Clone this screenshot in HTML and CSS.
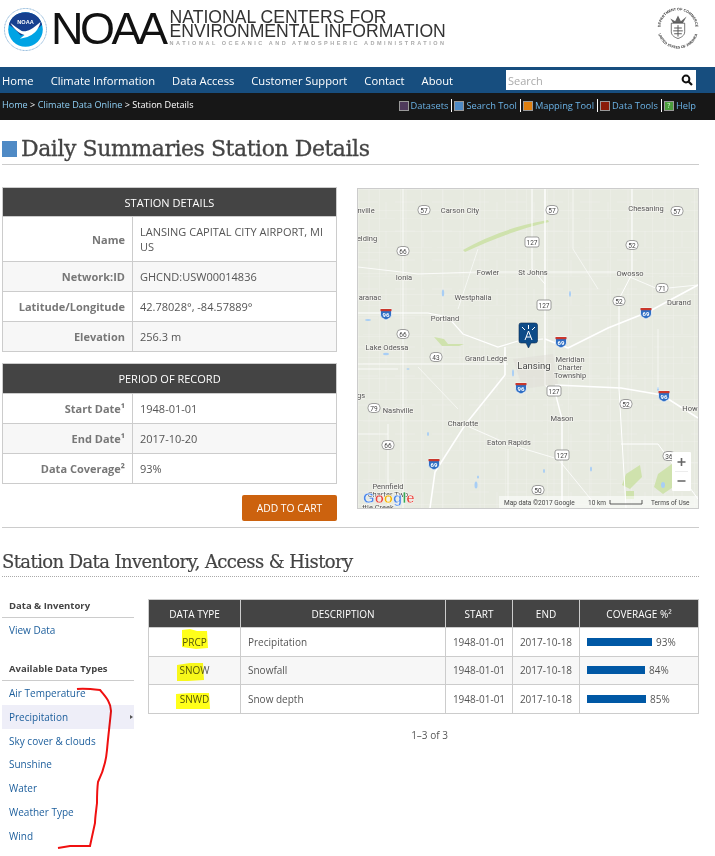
FILE: index.html
```html
<!DOCTYPE html>
<html>
<head>
  <title>Daily Summaries Station Details</title>
  <link rel="stylesheet" href="styles.css">
</head>
<body>

  <div class="masthead">
    <svg class="noaa-seal" viewBox="0 0 46 46" width="43" height="43">
      <circle cx="23" cy="23" r="22.5" fill="#fff" stroke="#1c6fb5" stroke-width="0.6" stroke-dasharray="1 0.6"/>
      <circle cx="23" cy="23" r="18.5" fill="#00a3e4"/>
      <path d="M5.2 18C7 10 14 4.5 23 4.5S39 10 40.8 18C37 22 33 24 28 26.5L18 29.5C14 25 10 21 5.2 18Z" fill="#17408f"/>
      <path d="M7 16C11 19 15 22 19 24.5C23 26 29 24 39 15C37 24 31 29 25 31L17 33L22 29C16 27 10 22 7 16Z" fill="#fff"/>
      <text x="23" y="17" class="seal-name">NOAA</text>
    </svg>
    <div class="noaa-mark">NOAA</div>
    <div class="center-name">
      <div class="center-line">NATIONAL CENTERS FOR</div>
      <div class="center-line">ENVIRONMENTAL INFORMATION</div>
      <div class="center-sub">NATIONAL OCEANIC AND ATMOSPHERIC ADMINISTRATION</div>
    </div>
    <svg class="doc-seal" viewBox="0 0 46 46" width="44" height="44">
      <defs>
        <path id="seal-top" d="M4.5 23A18.500 18.500 0 0 1 41.500 23"/>
        <path id="seal-bottom" d="M1.500 23A21.500 21.500 0 0 0 44.500 23"/>
      </defs>
      <text class="doc-seal-text"><textPath href="#seal-top" startOffset="50%">DEPARTMENT OF COMMERCE</textPath></text>
      <text class="doc-seal-text"><textPath href="#seal-bottom" startOffset="50%">UNITED STATES OF AMERICA</textPath></text>
      <path d="M15 13L20 16L23 10L26 16L32 11L28 18H18Z" fill="#666"/>
      <path d="M16 18H30V27C30 31 26 33 23 34C20 33 16 31 16 27Z" fill="#fff" stroke="#333" stroke-width="0.7"/>
      <path d="M23 20V32M19 23L27 23M18 26L28 26M19 29L27 29" stroke="#555" stroke-width="1"/>
    </svg>
  </div>

  <div class="nav-bar">
    <a class="nav-link">Home</a>
    <a class="nav-link">Climate Information</a>
    <a class="nav-link">Data Access</a>
    <a class="nav-link">Customer Support</a>
    <a class="nav-link">Contact</a>
    <a class="nav-link">About</a>
    <div class="search-box">
      <span class="search-text">Search</span>
      <svg width="12" height="12" viewBox="0 0 12 12">
        <circle cx="5" cy="5" r="3.4" fill="none" stroke="#111" stroke-width="2"/>
        <path d="M7.5 7.5L11 11" stroke="#111" stroke-width="2.2"/>
      </svg>
    </div>
  </div>

  <div class="crumb-bar">
    <div class="crumbs"><a>Home</a> &gt; <a>Climate Data Online</a> &gt; <span class="crumb-here">Station Details</span></div>
    <div class="tools">
      <a class="tool"><span class="swatch swatch-datasets"></span>Datasets</a>
      <a class="tool"><span class="swatch swatch-search"></span>Search Tool</a>
      <a class="tool"><span class="swatch swatch-mapping"></span>Mapping Tool</a>
      <a class="tool"><span class="swatch swatch-data"></span>Data Tools</a>
      <a class="tool"><span class="swatch swatch-help">?</span>Help</a>
    </div>
  </div>

  <div class="page">
    <h1 class="page-title"><span class="title-box"></span>Daily Summaries Station Details</h1>

    <div class="detail-row">
      <div class="detail-col">
        <table class="info-table">
          <colgroup><col class="info-label-col"><col></colgroup>
          <tr><th colspan="2" class="head-short">STATION DETAILS</th></tr>
          <tr><td class="info-label cell-tall">Name</td><td>LANSING CAPITAL CITY AIRPORT, MI US</td></tr>
          <tr class="alt"><td class="info-label">Network:ID</td><td>GHCND:USW00014836</td></tr>
          <tr><td class="info-label">Latitude/Longitude</td><td>42.78028°, -84.57889°</td></tr>
          <tr class="alt"><td class="info-label">Elevation</td><td>256.3 m</td></tr>
        </table>
        <table class="info-table">
          <colgroup><col class="info-label-col"><col></colgroup>
          <tr><th colspan="2">PERIOD OF RECORD</th></tr>
          <tr><td class="info-label">Start Date¹</td><td>1948-01-01</td></tr>
          <tr class="alt"><td class="info-label">End Date¹</td><td>2017-10-20</td></tr>
          <tr><td class="info-label">Data Coverage²</td><td>93%</td></tr>
        </table>
        <div class="cart-row"><button class="cart-btn">ADD TO CART</button></div>
      </div>

      <svg class="map" viewBox="0 0 340 319" width="342" height="321">
        <defs>
          <pattern id="grid" width="21" height="21" patternUnits="userSpaceOnUse">
            <path d="M0 0H21M0 0V21" stroke="#f2f3ec" stroke-width="0.7" fill="none"/>
          </pattern>
          <pattern id="grid-fine" width="37" height="29" patternUnits="userSpaceOnUse">
            <path d="M5 0H37M11 0V29M0 13H20M28 13V29" stroke="#f0f1ea" stroke-width="0.5" fill="none"/>
          </pattern>
        </defs>
        <rect width="340" height="319" fill="#e7eae0"/>
        <rect width="340" height="319" fill="url(#grid)"/>
        <rect width="340" height="319" fill="url(#grid-fine)"/>
        <g fill="#cfe2ad">
          <path d="M105 61C125 50 150 38 190 31L191 33C160 40 130 52 107 63Z"/>
          <path d="M76 148L86 150L90 155L106 155L101 157L84 157Z"/>
          <path d="M268 285L282 276L284 288L272 300L264 296Z"/>
          <path d="M300 285L318 272L324 292L305 305L296 298Z"/>
          <path d="M268 302H276V310H268Z"/>
        </g>
        <g fill="#a8cef5">
          <ellipse cx="10" cy="131" rx="3" ry="1"/><ellipse cx="212" cy="105" rx="1" ry="3"/>
          <ellipse cx="85" cy="104" rx="1.200" ry="3.500"/><ellipse cx="118" cy="296" rx="1.500" ry="3.500"/>
          <ellipse cx="28" cy="165" rx="3" ry="1.200"/><ellipse cx="186" cy="282" rx="1" ry="2"/>
          <ellipse cx="50" cy="180" rx="1.500" ry="0.800"/><ellipse cx="300" cy="200" rx="1" ry="2"/>
          <ellipse cx="233" cy="280" rx="1" ry="2.500"/><ellipse cx="155" cy="184" rx="1" ry="3.500"/>
          <ellipse cx="305" cy="296" rx="2" ry="3"/><ellipse cx="316" cy="285" rx="1.500" ry="2.500"/>
          <ellipse cx="120" cy="288" rx="1" ry="1.500"/><ellipse cx="70" cy="245" rx="1" ry="2"/>
        </g>
        <g fill="none" stroke="#fff" stroke-width="1.2">
          <path d="M0 124H70L90 128L105 145L140 158L160 152L185 150"/>
          <path d="M187 0V196L197 203L204 230V319" stroke-width="1.400"/>
          <path d="M147 186L107 236L77 283L72 319" stroke-width="1.600"/>
          <path d="M147 186V158" stroke-width="1.600"/>
          <path d="M210 159L250 139L290 123L340 96" stroke-width="1.600"/>
          <path d="M197 196L263 199L304 206L340 229" stroke-width="1.600"/>
          <path d="M45 0V319" stroke-width="0.800"/>
          <path d="M30 235V319" stroke-width="0.800"/>
          <path d="M0 175H150M0 180H40" stroke-width="0.800"/>
          <path d="M274 0V85L261 110V200L268 319" stroke-width="1"/>
          <path d="M174 0V80L187 95" stroke-width="1"/>
          <path d="M0 78L60 85L120 83H260L300 100L340 96" stroke-width="0.800"/>
          <path d="M107 236L150 255L200 270L240 319" stroke-width="0.800"/>
          <path d="M263 255H300L340 310" stroke-width="1"/>
          <path d="M187 150L210 159" stroke-width="1.600"/>
          <path d="M60 178L100 220M0 245H30M100 120L120 60M215 0V60L240 100M300 140V200M150 260V319" stroke-width="0.600"/>
        </g>
        <path d="M155 170L195 165L200 195L165 200Z" fill="#dedcd4" opacity="0.45"/>

        <g class="map-label">
          <text x="8" y="24">nville</text><text x="102" y="24">Carson City</text><text x="288" y="22">Chesaning</text>
          <text x="9" y="52">elding</text><text x="46" y="91">Ionia</text><text x="130" y="86">Fowler</text>
          <text x="175" y="86">St Johns</text><text x="272" y="87">Owosso</text><text x="12" y="111">aranac</text>
          <text x="115" y="111">Westphalia</text><text x="321" y="116">Durand</text><text x="87" y="132">Portland</text>
          <text x="29" y="161">Lake Odessa</text><text x="128" y="172">Grand Ledge</text>
          <text x="212" y="173">Meridian</text><text x="212" y="181">Charter</text><text x="212" y="189">Township</text>
          <text x="3" y="209">gs</text><text x="40" y="224">Nashville</text><text x="332" y="222">How</text>
          <text x="105" y="237">Charlotte</text><text x="204" y="232">Mason</text><text x="151" y="256">Eaton Rapids</text>
          <text x="30" y="300">Pennfield</text><text x="30" y="308">Charter Twp</text><text x="20" y="321">ttle Creek</text>
          <text x="176" y="180" class="map-city">Lansing</text>
        </g>

        <g class="shield">
          <g transform="translate(66 21)"><rect x="-6" y="-4.500" width="12" height="9" rx="4"/><text y="2.500">57</text></g>
          <g transform="translate(194 21)"><rect x="-6" y="-4.500" width="12" height="9" rx="4"/><text y="2.500">57</text></g>
          <g transform="translate(319 22)"><rect x="-6" y="-4.500" width="12" height="9" rx="4"/><text y="2.500">57</text></g>
          <g transform="translate(274 56)"><rect x="-6" y="-4.500" width="12" height="9" rx="4"/><text y="2.500">52</text></g>
          <g transform="translate(45 62)"><rect x="-6" y="-4.500" width="12" height="9" rx="4"/><text y="2.500">66</text></g>
          <g transform="translate(304 99)"><rect x="-6" y="-4.500" width="12" height="9" rx="4"/><text y="2.500">71</text></g>
          <g transform="translate(261 112)"><rect x="-6" y="-4.500" width="12" height="9" rx="4"/><text y="2.500">52</text></g>
          <g transform="translate(45 145)"><rect x="-6" y="-4.500" width="12" height="9" rx="4"/><text y="2.500">66</text></g>
          <g transform="translate(78 168)"><rect x="-6" y="-4.500" width="12" height="9" rx="4"/><text y="2.500">43</text></g>
          <g transform="translate(268 215)"><rect x="-6" y="-4.500" width="12" height="9" rx="4"/><text y="2.500">52</text></g>
          <g transform="translate(16 219)"><rect x="-6" y="-4.500" width="12" height="9" rx="4"/><text y="2.500">79</text></g>
          <g transform="translate(30 256)"><rect x="-6" y="-4.500" width="12" height="9" rx="4"/><text y="2.500">66</text></g>
          <g transform="translate(180 301)"><rect x="-6" y="-4.500" width="12" height="9" rx="4"/><text y="2.500">50</text></g>
          <g transform="translate(311 267)"><rect x="-6" y="-4.500" width="12" height="9" rx="4"/><text y="2.500">36</text></g>
          <g transform="translate(174 53)"><rect x="-7" y="-5" width="14" height="10" rx="2"/><text y="2.500">127</text></g>
          <g transform="translate(186 116)"><rect x="-7" y="-5" width="14" height="10" rx="2"/><text y="2.500">127</text></g>
          <g transform="translate(196 202)"><rect x="-7" y="-5" width="14" height="10" rx="2"/><text y="2.500">127</text></g>
          <g transform="translate(204 266)"><rect x="-7" y="-5" width="14" height="10" rx="2"/><text y="2.500">127</text></g>
        </g>

        <g class="interstate">
          <g transform="translate(28 125)"><path d="M-5.500 -5H5.500V1C5.500 3.500 2 5 0 6C-2 5 -5.500 3.500 -5.500 1Z"/><rect x="-5.500" y="-5" width="11" height="2.200"/><text y="3">96</text></g>
          <g transform="translate(203 153)"><path d="M-5.500 -5H5.500V1C5.500 3.500 2 5 0 6C-2 5 -5.500 3.500 -5.500 1Z"/><rect x="-5.500" y="-5" width="11" height="2.200"/><text y="3">69</text></g>
          <g transform="translate(288 124)"><path d="M-5.500 -5H5.500V1C5.500 3.500 2 5 0 6C-2 5 -5.500 3.500 -5.500 1Z"/><rect x="-5.500" y="-5" width="11" height="2.200"/><text y="3">69</text></g>
          <g transform="translate(163 199)"><path d="M-5.500 -5H5.500V1C5.500 3.500 2 5 0 6C-2 5 -5.500 3.500 -5.500 1Z"/><rect x="-5.500" y="-5" width="11" height="2.200"/><text y="3">96</text></g>
          <g transform="translate(306 207)"><path d="M-5.500 -5H5.500V1C5.500 3.500 2 5 0 6C-2 5 -5.500 3.500 -5.500 1Z"/><rect x="-5.500" y="-5" width="11" height="2.200"/><text y="3">96</text></g>
          <g transform="translate(76 275)"><path d="M-5.500 -5H5.500V1C5.500 3.500 2 5 0 6C-2 5 -5.500 3.500 -5.500 1Z"/><rect x="-5.500" y="-5" width="11" height="2.200"/><text y="3">69</text></g>
        </g>

        <path d="M163 134H177Q179.500 134 179.500 136V152Q179.500 154 177 154H173L170.500 159L168 154H163Q161 154 161 152V136Q161 134 163 134Z" fill="#0d4b88" stroke="#0b2c52" stroke-width="0.6"/>
        <path d="M170.500 142L167 151M170.500 142L174 151M168 148H173M164 138L167 141M177 138L174 141M170.500 136V140" stroke="#fff" stroke-width="1" fill="none"/>

        <g class="map-zoom">
          <rect x="314" y="263" width="19" height="39" rx="1" fill="#fff"/>
          <path d="M317 282.500H330" stroke="#e4e4e4" stroke-width="0.7"/>
          <path d="M319.500 273H327.500M323.500 269V277M319.500 292H327.500" stroke="#666" stroke-width="1.6"/>
        </g>

        <text x="5" y="314" class="google-mark"><tspan fill="#4a86e8">G</tspan><tspan fill="#e8453c">o</tspan><tspan fill="#f4b400">o</tspan><tspan fill="#4a86e8">g</tspan><tspan fill="#34a853">l</tspan><tspan fill="#e8453c">e</tspan></text>
        <rect x="141" y="307" width="199" height="12" fill="#fff" opacity="0.55"/>
        <text x="146" y="316" class="map-credit">Map data ©2017 Google</text>
        <text x="230" y="316" class="map-credit">10 km</text>
        <path d="M252 311V315H284V311" fill="none" stroke="#333" stroke-width="0.8"/>
        <text x="293" y="316" class="map-credit">Terms of Use</text>
      </svg>
    </div>

    <h2 class="section-title">Station Data Inventory, Access &amp; History</h2>

    <div class="inventory-row">
      <div class="side-nav">
        <div class="side-head">Data &amp; Inventory</div>
        <a class="side-link">View Data</a>
        <div class="side-head side-head-next">Available Data Types</div>
        <a class="side-link">Air Temperature</a>
        <a class="side-link side-current">Precipitation<span class="side-arrow"></span></a>
        <a class="side-link side-link-short">Sky cover &amp; clouds</a>
        <a class="side-link">Sunshine</a>
        <a class="side-link">Water</a>
        <a class="side-link">Weather Type</a>
        <a class="side-link">Wind</a>
      </div>

      <div class="inventory-main">
        <table class="data-table">
          <tr>
            <th class="col-type">DATA TYPE</th><th>DESCRIPTION</th><th class="col-date">START</th>
            <th class="col-date">END</th><th class="col-cover">COVERAGE %²</th>
          </tr>
          <tr>
            <td class="cell-type">PRCP</td><td>Precipitation</td><td class="cell-date">1948-01-01</td><td class="cell-date">2017-10-18</td>
            <td><span class="cover-bar" style="width:65px"></span>93%</td>
          </tr>
          <tr class="alt">
            <td class="cell-type">SNOW</td><td>Snowfall</td><td class="cell-date">1948-01-01</td><td class="cell-date">2017-10-18</td>
            <td><span class="cover-bar" style="width:58px"></span>84%</td>
          </tr>
          <tr>
            <td class="cell-type">SNWD</td><td>Snow depth</td><td class="cell-date">1948-01-01</td><td class="cell-date">2017-10-18</td>
            <td><span class="cover-bar" style="width:59px"></span>85%</td>
          </tr>
        </table>
        <div class="pager">1–3 of 3</div>
      </div>
    </div>
  </div>

  <!-- hand markup drawn over the screenshot -->
  <svg class="markup" viewBox="0 0 715 856" width="715" height="856">
    <path d="M182 630L190 629L197 631L207 631L208 648L196 649L182 647Z" fill="#ffff1a"/>
    <path d="M177 665L190 663L203 663L204 680L188 681L177 681Z" fill="#ffff1a"/>
    <path d="M176 694L190 693L209 693L210 709L176 709Z" fill="#ffff1a"/>
    <path d="M77 689C84 688 92 689 100 690C105 696 111 702 111 711C110 722 108 738 107 750C106 762 103 772 98 782C97 790 97 797 97 803C96 812 95 818 95 823L90 846L70 846L58 848" fill="none" stroke="#f01010" stroke-width="2"/>
  </svg>

</body>
</html>
```

FILE: styles.css
```css
body {
  margin: 0;
  width: 715px;
  height: 856px;
  overflow: hidden;
  position: relative;
  background: #fff;
  color: #555;
  font-family: "Open Sans", Arial, sans-serif;
  font-size: 11px;
}

a {
  text-decoration: none;
}

/* masthead */
.masthead {
  height: 67px;
  display: flex;
  align-items: flex-start;
  box-sizing: border-box;
  padding: 6px 15px 0 4px;
}

.noaa-seal {
  flex: none;
  margin: 2px 4px 0 0;
}

.seal-name {
  fill: #fff;
  font-family: "Liberation Sans", Arial, sans-serif;
  font-size: 6px;
  font-weight: bold;
  text-anchor: middle;
}

.noaa-mark {
  font-family: "Liberation Sans", Arial, sans-serif;
  font-size: 45px;
  line-height: 46px;
  letter-spacing: -3.500px;
  color: #111;
  margin-right: 5px;
}

.center-name {
  padding-top: 4px;
}

.center-line {
  font-family: "Liberation Sans", Arial, sans-serif;
  font-size: 17.600px;
  line-height: 14px;
  color: #333;
  white-space: nowrap;
}

.center-sub {
  font-family: "Liberation Sans", Arial, sans-serif;
  font-size: 5.500px;
  font-weight: bold;
  letter-spacing: 2.530px;
  line-height: 10px;
  color: #aaa;
  white-space: nowrap;
}

.doc-seal {
  margin-left: auto;
}

.doc-seal-text {
  font-family: "Liberation Sans", Arial, sans-serif;
  font-size: 3.800px;
  font-weight: bold;
  fill: #333;
  text-anchor: middle;
}

/* nav */
.nav-bar {
  height: 26px;
  background: #174e7f;
  display: flex;
  align-items: center;
  gap: 17px;
  padding-left: 2px;
  box-sizing: border-box;
}

.nav-link {
  color: #fff;
  font-size: 11.200px;
}

.search-box {
  position: relative;
  margin-left: auto;
  margin-right: 19px;
  width: 190px;
  height: 20px;
  background: #fff;
  display: flex;
  align-items: center;
  justify-content: space-between;
  padding: 0 3px 0 2px;
  box-sizing: border-box;
}

.search-text {
  color: #aaa;
  font-size: 11px;
}

.crumb-bar {
  height: 27px;
  background: #171717;
  display: flex;
  justify-content: space-between;
  padding: 5px 19px 0 2px;
  box-sizing: border-box;
  font-size: 9.100px;
  color: #fff;
}

.crumbs a {
  color: #8fd0f5;
}

.crumb-here {
  color: #fff;
}

.tools {
  display: flex;
  height: 13px;
  margin-top: 1px;
  font-size: 9.300px;
}

.tool {
  color: #6bb3e6;
  display: flex;
  align-items: center;
  padding: 0 3px 0 2px;
  border-left: 1px solid #fff;
  line-height: 13px;
}

.tool:first-child {
  border-left: none;
}

.tool:last-child {
  padding-right: 0;
}

.swatch {
  width: 8px;
  height: 8px;
  border: 1px solid #999;
  margin-right: 2px;
  font-size: 7px;
  line-height: 8px;
  text-align: center;
  color: #cfc;
}

.swatch-datasets { background: #4f3a5c; }
.swatch-search { background: #4f8ac5; }
.swatch-mapping { background: #de7f10; }
.swatch-data { background: #8a1c08; }
.swatch-help { background: #4c9c3c; }

/* page */
.page {
  padding: 0 16px 0 2px;
}

.page-title {
  margin: 0;
  height: 45px;
  box-sizing: border-box;
  padding-top: 14px;
  border-bottom: 1px solid #ccc;
  display: flex;
  align-items: flex-start;
  font-family: "DejaVu Serif", serif;
  font-weight: normal;
  font-size: 22px;
  line-height: 30px;
  letter-spacing: -0.450px;
  -webkit-text-stroke: 0.300px #444;
  color: #444;
  white-space: nowrap;
}

.title-box {
  width: 15px;
  height: 16px;
  background: #4f8ac5;
  margin: 7px 4px 0 0;
}

.detail-row {
  display: flex;
  justify-content: space-between;
  margin-top: 23px;
  padding-bottom: 6px;
  border-bottom: 1px solid #ccc;
}

.detail-col {
  width: 335px;
  margin-top: -1px;
}

.info-table {
  width: 335px;
  border-collapse: collapse;
  table-layout: fixed;
  margin-bottom: 11px;
}

.info-label-col {
  width: 130px;
}

.info-table th {
  background: #444;
  color: #fff;
  font-weight: normal;
  height: 29px;
  padding: 0;
  border: 1px solid #ccc;
}

.info-table th.head-short {
  height: 28px;
}

.info-table td {
  border: 1px solid #ccc;
  height: 29px;
  padding: 0 7px;
  line-height: 15px;
}

.info-table td.cell-tall {
  height: 44px;
}

.info-table td.info-label {
  text-align: right;
  font-weight: bold;
  color: #777;
}

.alt td {
  background: #f7f7f7;
}

.cart-row {
  display: flex;
  justify-content: flex-end;
}

.cart-btn {
  width: 95px;
  height: 26px;
  background: #cc620e;
  border: none;
  border-radius: 2px;
  color: #fff;
  font-family: "Open Sans", Arial, sans-serif;
  font-size: 10.300px;
  padding: 0;
}

/* map */
.map {
  box-sizing: border-box;
  border: 1px solid #ccc;
  flex: none;
  align-self: flex-start;
  filter: blur(0.4px);
}

.map-label text {
  font-family: Roboto, Arial, sans-serif;
  font-size: 7.500px;
  text-anchor: middle;
  fill: #555;
  stroke: #f4f4ef;
  stroke-width: 1.500px;
  paint-order: stroke;
}

.map-label text.map-city {
  font-size: 9.500px;
  fill: #444;
}

.shield rect {
  fill: #fff;
  stroke: #777;
  stroke-width: 0.700px;
}

.shield text {
  font-family: Roboto, Arial, sans-serif;
  font-size: 6.500px;
  text-anchor: middle;
  fill: #444;
}

.interstate path {
  fill: #2f6fc4;
  stroke: #fff;
  stroke-width: 0.700px;
}

.interstate rect {
  fill: #c9372c;
}

.interstate text {
  font-family: Roboto, Arial, sans-serif;
  font-size: 6px;
  font-weight: bold;
  text-anchor: middle;
  fill: #fff;
}

.google-mark {
  font-family: "Liberation Sans", Arial, sans-serif;
  font-size: 15px;
  font-weight: bold;
  stroke: #fff;
  stroke-width: 0.400px;
}

.map-credit {
  font-family: Roboto, Arial, sans-serif;
  font-size: 6.500px;
  fill: #444;
}

/* inventory */
.section-title {
  margin: 0 0 22px;
  height: 49px;
  box-sizing: border-box;
  padding-top: 22px;
  border-bottom: 1px dotted #aaa;
  font-family: "DejaVu Serif", serif;
  font-weight: normal;
  font-size: 18px;
  line-height: 24px;
  letter-spacing: -0.600px;
  -webkit-text-stroke: 0.200px #444;
  color: #444;
  white-space: nowrap;
}

.inventory-row {
  display: flex;
  gap: 14px;
}

.side-nav {
  width: 132px;
  flex: none;
  display: flex;
  flex-direction: column;
  font-size: 10px;
  margin-top: -1px;
}

.side-head {
  font-weight: bold;
  color: #444;
  padding: 0 7px;
  line-height: 12px;
  height: 17px;
  margin-top: 2px;
  border-bottom: 1px solid #ccc;
  font-size: 9.500px;
}

.side-head-next {
  margin-top: 21px;
}

.side-link {
  color: #1c5e9c;
  height: 24px;
  line-height: 24px;
  padding: 0 7px;
  position: relative;
}

.side-link-short {
  height: 23px;
}

.side-current {
  background: #eeeef8;
}

.side-arrow {
  position: absolute;
  right: 1px;
  top: 10px;
  border-left: 3px solid #555;
  border-top: 2.500px solid transparent;
  border-bottom: 2.500px solid transparent;
}

.inventory-main {
  flex: 1;
}

.data-table {
  width: 551px;
  border-collapse: collapse;
  table-layout: fixed;
  font-size: 10px;
}

.data-table th {
  background: #444;
  color: #fff;
  font-weight: normal;
  height: 27px;
  padding: 0;
  border: 1px solid #ccc;
}

.data-table td {
  border: 1px solid #ccc;
  height: 27.500px;
  padding: 0 7px;
}

.col-type { width: 91px; }
.col-date { width: 66px; }
.col-cover { width: 118px; }

.data-table td.cell-type {
  text-align: center;
  padding: 0;
}

.data-table td.cell-date {
  text-align: center;
  padding: 0;
}

.cover-bar {
  display: inline-block;
  height: 8px;
  background: #0058a5;
  margin-right: 4px;
}

.pager {
  text-align: center;
  margin: 14px 0 0 12px;
  font-size: 10px;
}

/* hand markup on top of the screenshot */
.markup {
  position: absolute;
  left: 0;
  top: 0;
  pointer-events: none;
  mix-blend-mode: multiply;
}
```
